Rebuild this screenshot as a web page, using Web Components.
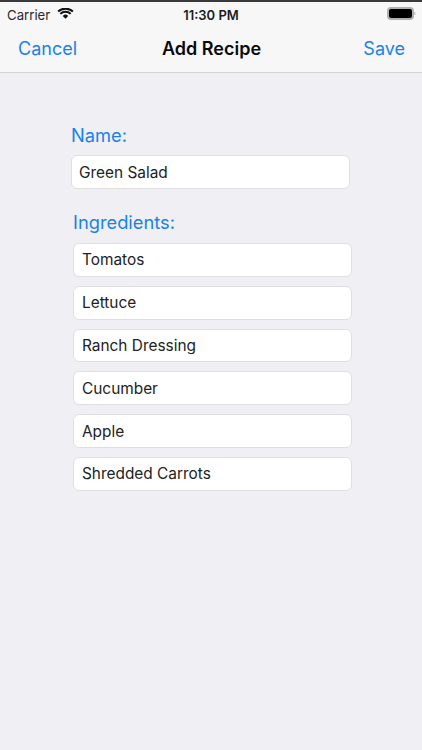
<!DOCTYPE html>
<html><head><meta charset="utf-8">
<style>
html,body{margin:0;padding:0;height:100%;background:#efeff4;font-family:Inter,"Liberation Sans",sans-serif}
body{width:422px;height:750px;overflow:hidden;display:flex;flex-direction:column}
</style></head><body>
<template id="status-t"><style>
:host{display:flex;align-items:center;height:21px;padding:2px 0 0 7px;font-size:13.200px;color:#2a2a2a;position:relative}
.wifi{margin-left:7px;margin-top:-3px}
.time{position:absolute;left:0;right:0;top:5px;text-align:center;font-weight:600;font-size:13px;line-height:16px;color:#1c1c1c}
.batt{margin-left:auto;margin-right:6px;margin-top:-3px}
</style><span>Carrier</span>
<svg class="wifi" width="17" height="11" viewBox="0 0 17 11"><path d="M8.500 10.800 5.800 7.900a3.900 3.900 0 0 1 5.400 0Z" fill="#111"/><path d="M1.100 3.600a10.800 10.800 0 0 1 14.800 0M3.300 5.900a7.500 7.500 0 0 1 10.400 0" fill="none" stroke="#111" stroke-width="2"/></svg>
<span class="time">11:30 PM</span>
<svg class="batt" width="29" height="13" viewBox="0 0 29 13"><rect x="1" y="1" width="25" height="11" rx="3" fill="#000" stroke="#b0b0b2" stroke-width="2"/><path d="M27.400 5v3c.8-.2 1.100-.8 1.100-1.500S28.200 5.200 27.400 5Z" fill="#aaa"/></svg>
</template>
<template id="nav-t"><style>
:host{display:block;background:#f7f7f8;border-top:2px solid #3a3a3a;border-bottom:1px solid #d4d4d6;flex:none}
.row{display:grid;grid-template-columns:1fr auto 1fr;align-items:center;height:47px;padding:0 17px 0 18px;font-size:18px;color:#1a82e8}
.t{font-weight:600;color:#0a0a0a}
.r{text-align:right}
</style><slot name="status"></slot><div class="row"><span>Cancel</span><span class="t">Add Recipe</span><span class="r">Save</span></div></template>
<template id="field-t"><style>
:host{display:flex;align-items:center;box-sizing:border-box;width:279px;height:33.800px;padding:0 8px;background:#fff;border:1px solid #dfdfe2;border-radius:6px;font-size:15.400px;color:#222}
</style><slot></slot></template>
<template id="label-t"><style>
:host{display:block;font-size:18.300px;line-height:22px;color:#1a82e8}
</style><slot></slot></template>
<template id="form-t"><style>
:host{display:flex;flex-direction:column;padding:51px 0 0 71px}
.name{display:flex;flex-direction:column;gap:9.400px}
.ing{display:flex;flex-direction:column;margin:21.800px 0 0 2px;gap:10px}
.list{display:flex;flex-direction:column;gap:9px}
::slotted(text-field.first){padding-left:7px}
</style><div class="name"><slot name="name"></slot></div><div class="ing"><slot name="ing"></slot><div class="list"><slot></slot></div></div></template>
<recipe-nav><status-bar slot="status"></status-bar></recipe-nav>
<recipe-form>
<form-label slot="name">Name:</form-label>
<text-field slot="name" class="first">Green Salad</text-field>
<form-label slot="ing">Ingredients:</form-label>
<text-field>Tomatos</text-field>
<text-field>Lettuce</text-field>
<text-field>Ranch Dressing</text-field>
<text-field>Cucumber</text-field>
<text-field>Apple</text-field>
<text-field>Shredded Carrots</text-field>
</recipe-form>
<script>
const def=(n,t)=>customElements.define(n,class extends HTMLElement{constructor(){super();this.attachShadow({mode:'open'}).appendChild(document.getElementById(t).content.cloneNode(true));}});
def('status-bar','status-t');def('recipe-nav','nav-t');def('text-field','field-t');def('form-label','label-t');def('recipe-form','form-t');
</script>
</body></html>
